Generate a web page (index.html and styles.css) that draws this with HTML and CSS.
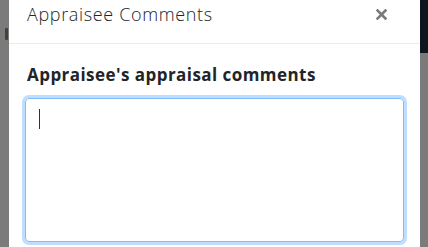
FILE: index.html
```html
<!DOCTYPE html>
<html lang="en">
<head>
    <meta charset="UTF-8">
    <meta name="viewport" content="width=device-width, initial-scale=1.0">
    <title>Appraisee Comments</title>
    <link rel="stylesheet" href="styles.css">
</head>
<body>

<div class="page">
    <div class="side side-left">
        <span class="peek"></span>
    </div>

    <div class="modal">
        <div class="modal-header">
            <h5 class="modal-title">Appraisee Comments</h5>
            <button class="close" type="button" aria-label="Close">
                <svg width="11" height="11" viewBox="0 0 11 11">
                    <path d="M1.5 1.5 L9.5 9.5 M9.5 1.5 L1.5 9.5" stroke="currentColor" stroke-width="2.6" stroke-linecap="square"/>
                </svg>
            </button>
        </div>
        <div class="modal-body">
            <h4 class="field-label">Appraisee's appraisal comments</h4>
            <div class="comments-box"><span class="caret"></span></div>
        </div>
    </div>

    <div class="side side-right">
        <div class="navbar-edge"></div>
    </div>
</div>

</body>
</html>
```

FILE: styles.css
```css
body {
    margin: 0;
    padding: 0;
    font-family: 'Open Sans', sans-serif;
    background-color: #7b7b7b;
    color: #212529;
    overflow: hidden;
}
.page {
    display: flex;
    height: 247px;
}
.side {
    background: #7b7b7b;
}
.side-left {
    width: 9px;
    padding-top: 28px;
}
.peek {
    display: block;
    width: 3px;
    height: 12px;
    margin-left: 5px;
    background: #4a3f33;
    border-radius: 1px;
}
.side-right {
    flex: 1;
}
.navbar-edge {
    height: 53px;
    background: #0e161e;
}
.modal {
    width: 411px;
    background: #ffffff;
}
.modal-header {
    display: flex;
    align-items: center;
    justify-content: space-between;
    height: 44px;
    box-sizing: border-box;
    padding: 0 33px 15px 18px;
    border-bottom: 1px solid #e9ecef;
}
.modal-title {
    margin: 0;
    font-size: 18px;
    font-weight: 300;
    letter-spacing: 0.65px;
    color: #212529;
}
.close {
    display: flex;
    padding: 0;
    border: none;
    background: none;
    color: #7a7a7a;
    cursor: pointer;
}
.modal-body {
    padding: 19px 16px 0 16px;
}
.field-label {
    margin: 0 0 12px 2px;
    font-size: 17px;
    font-weight: 700;
    letter-spacing: 0.45px;
    color: #212529;
}
.comments-box {
    height: 144px;
    box-sizing: border-box;
    padding: 10px 13px;
    border: 1px solid #80bdff;
    border-radius: 4px;
    box-shadow: 0 0 0 3px rgba(0, 123, 255, 0.25);
}
.caret {
    display: block;
    width: 1px;
    height: 20px;
    background: #333;
}
```
